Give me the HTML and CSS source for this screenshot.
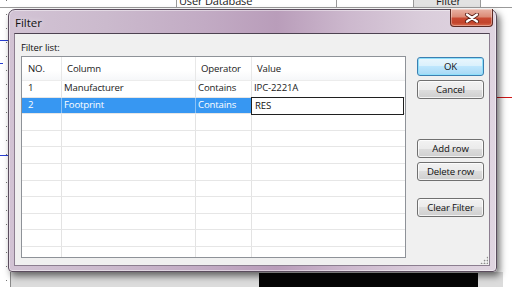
FILE: index.html
```html
<!DOCTYPE html>
<html lang="en">
<head>
    <meta charset="UTF-8">
    <title>Filter</title>
    <link rel="stylesheet" href="styles.css">
</head>
<body>

    <div class="desk">
        <!-- the schematic editor behind the dialog -->
        <div class="bg-head">
            <div class="bg-cell c-db"><span>User Database</span></div>
            <div class="bg-cell c-mid"></div>
            <div class="bg-cell c-filter"><span>Filter</span></div>
        </div>
        <div class="bg-dots"></div>
        <div class="bg-wire blue w1"></div>
        <div class="bg-wire blue w2"></div>
        <div class="bg-wire blue w3"></div>
        <div class="bg-wire red w4"></div>
        <div class="bg-bottom"></div>
        <div class="bg-black"></div>

        <div class="dialog">
            <div class="titlebar">
                <span class="title">Filter</span>
                <div class="close-btn">
                    <svg width="16" height="10" viewBox="0 0 16 10">
                        <path d="M3 1.5 L13 8.5 M13 1.5 L3 8.5" stroke="#5a2018" stroke-width="4" stroke-linecap="round"/>
                        <path d="M3 1.5 L13 8.5 M13 1.5 L3 8.5" stroke="#fff" stroke-width="2.2" stroke-linecap="round"/>
                    </svg>
                </div>
            </div>

            <div class="client">
                <div class="label">Filter list:</div>

                <div class="list">
                    <div class="row head">
                        <div class="cell c-no">NO.</div>
                        <div class="cell">Column</div>
                        <div class="cell">Operator</div>
                        <div class="cell last">Value</div>
                    </div>
                    <div class="row">
                        <div class="cell c-no">1</div>
                        <div class="cell">Manufacturer</div>
                        <div class="cell">Contains</div>
                        <div class="cell last">IPC-2221A</div>
                    </div>
                    <div class="row selected">
                        <div class="cell c-no">2</div>
                        <div class="cell">Footprint</div>
                        <div class="cell">Contains</div>
                        <div class="cell last editing"><div class="editor">RES</div></div>
                    </div>
                    <div class="row"><div class="cell"></div><div class="cell"></div><div class="cell"></div><div class="cell last"></div></div>
                    <div class="row"><div class="cell"></div><div class="cell"></div><div class="cell"></div><div class="cell last"></div></div>
                    <div class="row"><div class="cell"></div><div class="cell"></div><div class="cell"></div><div class="cell last"></div></div>
                    <div class="row"><div class="cell"></div><div class="cell"></div><div class="cell"></div><div class="cell last"></div></div>
                    <div class="row"><div class="cell"></div><div class="cell"></div><div class="cell"></div><div class="cell last"></div></div>
                    <div class="row"><div class="cell"></div><div class="cell"></div><div class="cell"></div><div class="cell last"></div></div>
                    <div class="row"><div class="cell"></div><div class="cell"></div><div class="cell"></div><div class="cell last"></div></div>
                    <div class="row"><div class="cell"></div><div class="cell"></div><div class="cell"></div><div class="cell last"></div></div>
                    <div class="row"><div class="cell"></div><div class="cell"></div><div class="cell"></div><div class="cell last"></div></div>
                </div>

                <div class="buttons">
                    <div class="btn default">OK</div>
                    <div class="btn">Cancel</div>
                    <div class="btn add">Add row</div>
                    <div class="btn">Delete row</div>
                    <div class="btn clear">Clear Filter</div>
                </div>

                <div class="grip"></div>
            </div>
        </div>
    </div>

</body>
</html>
```

FILE: styles.css
```css
html, body {
    margin: 0;
    padding: 0;
}

body {
    width: 512px;
    height: 287px;
    overflow: hidden;
    background: #fff;
    font-family: "Open Sans", "Noto Sans", sans-serif;
    font-size: 9.6px;
    letter-spacing: -0.15px;
    color: #1a1a1a;
}

.desk {
    position: relative;
    width: 512px;
    height: 287px;
}

/* ---------- background app ---------- */

.bg-head {
    position: absolute;
    left: 0;
    top: 0;
    width: 512px;
    height: 7px;
    border-bottom: 1px solid #9a9a9a;
}

.bg-cell {
    position: absolute;
    top: 0;
    height: 7px;
    border-left: 1px solid #9a9a9a;
    border-right: 1px solid #9a9a9a;
    overflow: hidden;
    font-size: 11px;
}

.bg-cell span {
    position: absolute;
    top: -7px;
    white-space: nowrap;
}

.c-db {
    left: 176px;
    width: 159px;
    border-right: 0;
}

.c-db span {
    left: 2px;
}

.c-mid {
    left: 336px;
    width: 76px;
    border-right: 0;
}

.c-filter {
    left: 413px;
    width: 66px;
    background: #e2e2e2;
}

.c-filter span {
    left: 22px;
}

.bg-dots {
    position: absolute;
    left: 6px;
    top: 0;
    width: 1px;
    height: 287px;
    background: repeating-linear-gradient(to bottom, #777 0 1px, transparent 1px 14px);
}

.bg-wire {
    position: absolute;
    height: 1px;
}

.bg-wire.blue {
    background: #2a3fd0;
}

.bg-wire.red {
    background: #d01818;
}

.w1 { left: 0; top: 40px; width: 9px; }
.w2 { left: 0; top: 155px; width: 9px; }
.w3 { left: 0; top: 63px; width: 3px; }
.w4 { left: 497px; top: 97px; width: 15px; }

.bg-bottom {
    position: absolute;
    left: 10px;
    top: 272px;
    width: 492px;
    height: 15px;
    background: #dcdcdc;
    border-left: 1px solid #8a8a8a;
}

.bg-black {
    position: absolute;
    left: 259px;
    top: 273px;
    width: 219px;
    height: 14px;
    background: #050505;
}

/* ---------- dialog ---------- */

.dialog {
    position: absolute;
    left: 8px;
    top: 9px;
    width: 489px;
    height: 263px;
    box-sizing: border-box;
    border: 1px solid #5b4d5e;
    border-radius: 7px 7px 4px 4px;
    background: linear-gradient(to right, #d2c3d4 0%, #cbbacd 20%, #c2abc4 40%, #b99dba 55%, #cdb9ce 70%, #dacddb 85%, #e0d5e1 100%);
    box-shadow: 3px 4px 7px rgba(0, 0, 0, 0.55), inset 0 0 0 1px rgba(255, 255, 255, 0.45);
}

.titlebar {
    position: relative;
    height: 23px;
}

.title {
    position: absolute;
    left: 6px;
    top: 5px;
    font-size: 11.5px;
    letter-spacing: 0;
    color: #111;
    text-shadow: 0 0 6px rgba(255, 255, 255, 0.8);
}

.close-btn {
    position: absolute;
    right: 3px;
    top: -1px;
    width: 43px;
    height: 18px;
    box-sizing: border-box;
    border: 1px solid #5e2a24;
    border-top: 0;
    border-radius: 0 0 4px 4px;
    background: linear-gradient(to bottom, #e9b3a6 0%, #dc8c78 45%, #c94a33 55%, #c2442c 80%, #d86a4e 100%);
    box-shadow: inset 0 0 0 1px rgba(255, 255, 255, 0.35);
    display: flex;
    align-items: center;
    justify-content: center;
}

.client {
    position: relative;
    margin: 0 6px 0 5px;
    height: 233px;
    box-sizing: border-box;
    border: 1px solid #8c7e90;
    border-top-color: #4d4251;
    background: #f0f0f0;
    display: grid;
    grid-template-columns: 385px 67px;
    grid-template-rows: 17px 1fr;
    column-gap: 11px;
    padding: 5px 0 0 6px;
}

.label {
    grid-column: 1 / 3;
    line-height: 17px;
    color: #111;
}

/* ---------- list view ---------- */

.list {
    width: 385px;
    height: 202px;
    box-sizing: border-box;
    border: 1px solid #8e9298;
    background: #fff;
    overflow: hidden;
}

.row {
    display: grid;
    grid-template-columns: 40px 134px 56px 153px;
    height: 16.6px;
    box-sizing: border-box;
    border-bottom: 1px solid #e6e6e6;
}

.row.head {
    height: 24px;
    border-bottom: 1px solid #ececec;
    background: linear-gradient(to bottom, #ffffff 0%, #ffffff 60%, #f6f7f9 100%);
}

.cell {
    box-sizing: border-box;
    border-right: 1px solid #e3e3e3;
    padding: 1px 0 0 2px;
    line-height: 12px;
    white-space: nowrap;
    overflow: hidden;
}

.cell.last {
    border-right: 0;
}

.cell.c-no {
    padding-left: 6px;
}

.head .cell {
    padding: 0 0 0 5px;
    line-height: 23px;
    border-right-color: #e8e8e8;
}

.head .cell.c-no {
    padding-left: 6px;
}

.row.selected .cell {
    background: #3797f2;
    color: #fff;
    border-right-color: #8ac2f6;
}

.row.selected .cell.editing {
    background: #fff;
    position: relative;
    overflow: visible;
}

.editor {
    position: absolute;
    left: -1px;
    top: -1px;
    right: 1px;
    height: 18px;
    box-sizing: border-box;
    border: 1px solid #202020;
    background: #fff;
    color: #111;
    padding: 2px 0 0 3px;
    line-height: 12px;
}

/* ---------- buttons ---------- */

.buttons {
    display: flex;
    flex-direction: column;
    gap: 4px;
    padding-top: 1px;
}

.btn {
    height: 19px;
    box-sizing: border-box;
    border: 1px solid #707070;
    border-radius: 3px;
    background: linear-gradient(to bottom, #f2f2f2 0%, #ebebeb 50%, #dddddd 50%, #cfcfcf 100%);
    box-shadow: inset 0 0 0 1px rgba(255, 255, 255, 0.75);
    text-align: center;
    line-height: 17px;
    color: #111;
}

.btn.default {
    border-color: #3c7fb1;
    background: linear-gradient(to bottom, #eaf6fd 0%, #d9f0fc 50%, #bee6fd 50%, #a7d9f5 100%);
    box-shadow: inset 0 0 0 1px #8fe0fb;
}

.btn.add {
    margin-top: 36px;
}

.btn.clear {
    margin-top: 13px;
}

.grip {
    position: absolute;
    right: 1px;
    bottom: 1px;
    width: 8px;
    height: 8px;
    background: radial-gradient(circle, #8a8a8a 0.8px, transparent 1.1px) 0 0 / 3px 3px;
    clip-path: polygon(100% 0, 100% 100%, 0 100%);
}
```
